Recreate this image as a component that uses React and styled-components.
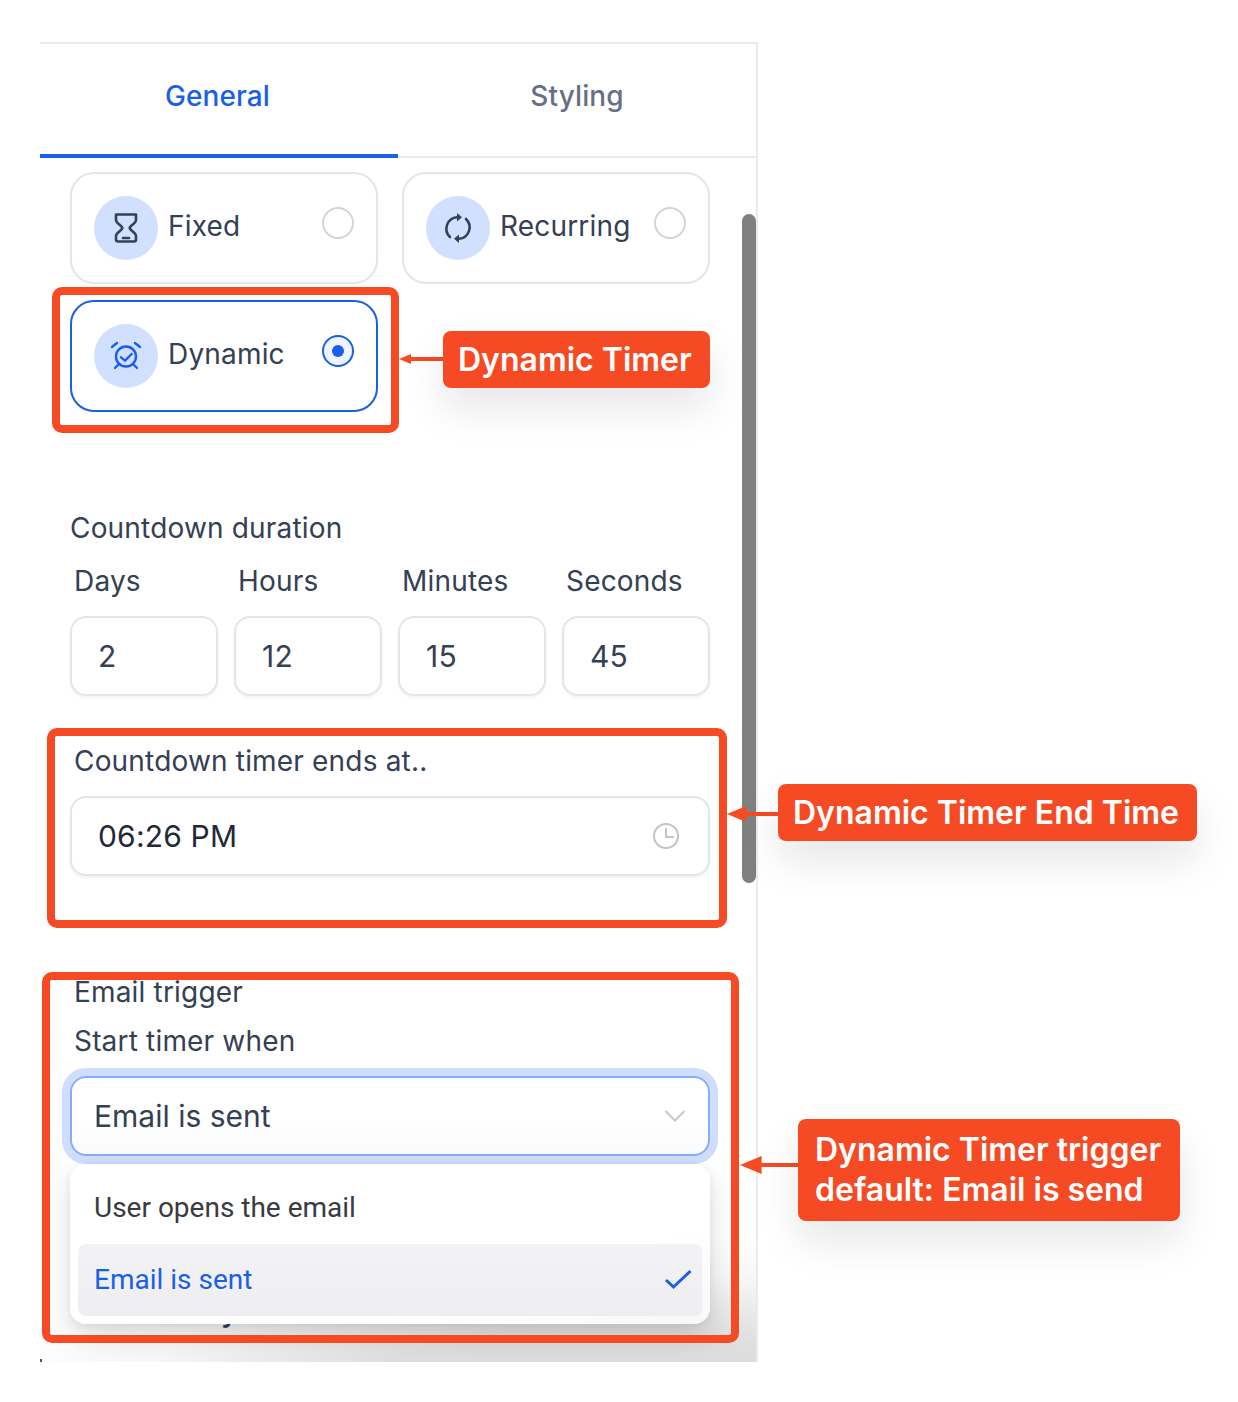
import React from "react";
import styled, { createGlobalStyle } from "styled-components";

const Global = createGlobalStyle`
  html, body { margin: 0; background: #fff; }
  body { font-family: Inter, "Liberation Sans", sans-serif; color: #344054; }
`;

const Stage = styled.div`
  position: relative;
  width: 1238px;
  height: 1402px;
  padding: 42px 0 0 40px;
  box-sizing: border-box;
  overflow: hidden;
`;

const Panel = styled.div`
  position: relative;
  width: 718px;
  height: 1320px;
  box-sizing: border-box;
  background: #fff;
  border-top: 2px solid #ebebef;
  border-right: 2px solid #ebebef;
  overflow: hidden;
  &::after {
    content: "";
    position: absolute;
    left: 0;
    bottom: 0;
    z-index: 4;
    width: 2px;
    height: 3px;
    background: #5a553f;
  }
`;

const Tabs = styled.div`
  display: grid;
  grid-template-columns: 358px 1fr;
  height: 114px;
  box-sizing: border-box;
  border-bottom: 2px solid #ebebef;
`;

const Tab = styled.div`
  display: flex;
  align-items: center;
  justify-content: center;
  height: 114px;
  box-sizing: border-box;
  padding: 0 ${(p) => (p.$active ? 3 : 0)}px 6px 0;
  font-size: 28px;
  font-weight: 500;
  letter-spacing: 0.1px;
  color: ${(p) => (p.$active ? "#1a5fe8" : "#667085")};
  border-bottom: 4px solid ${(p) => (p.$active ? "#1a5fe8" : "transparent")};
`;

const Body = styled.div`
  display: flex;
  flex-direction: column;
  width: 640px;
  padding: 14px 0 0 30px;
  letter-spacing: 0.18px;
`;

const Cards = styled.div`
  display: grid;
  grid-template-columns: 308px 308px;
  column-gap: 24px;
  row-gap: 16px;
`;

const Card = styled.div`
  display: flex;
  align-items: flex-start;
  height: 112px;
  box-sizing: border-box;
  padding: 22px;
  border-radius: 24px;
  border: 2px solid ${(p) => (p.$active ? "#1a5fe8" : "#e4e5ea")};
  background: #fff;
`;

const IconDisc = styled.div`
  display: flex;
  align-items: center;
  justify-content: center;
  flex: none;
  width: 64px;
  height: 64px;
  border-radius: 50%;
  background: #d1e0ff;
`;

const CardLabel = styled.div`
  flex: 1;
  margin-left: 10px;
  line-height: 60px;
  font-size: 28px;
  color: #344054;
`;

const Radio = styled.div`
  display: flex;
  align-items: center;
  justify-content: center;
  flex: none;
  width: 32px;
  height: 32px;
  margin-top: 11px;
  box-sizing: border-box;
  border-radius: 50%;
  border: 2px solid ${(p) => (p.$active ? "#1a5fe8" : "#d0d5dd")};
  background: ${(p) => (p.$active ? "#eff4ff" : "#fff")};
  &::after {
    content: "";
    display: ${(p) => (p.$active ? "block" : "none")};
    width: 12px;
    height: 12px;
    border-radius: 50%;
    background: #1a5fe8;
  }
`;

const SectionTitle = styled.div`
  margin-top: ${(p) => p.$top || 0}px;
  line-height: 34px;
  font-size: 28px;
  color: #344054;
`;

const FieldLabel = styled.div`
  margin-top: ${(p) => p.$top || 0}px;
  padding-left: 4px;
  line-height: 34px;
  font-size: 28px;
  color: #344054;
`;

const Grid = styled.div`
  display: grid;
  grid-template-columns: repeat(4, 148px);
  column-gap: 16px;
`;

const Field = styled.div`
  display: flex;
  flex-direction: column;
  gap: 18px;
  margin-top: 19px;
`;

const Input = styled.div`
  display: flex;
  align-items: center;
  justify-content: space-between;
  height: 80px;
  box-sizing: border-box;
  padding: 0 28px 0 26px;
  margin-top: ${(p) => p.$top || 0}px;
  border: 2px solid #e4e5ea;
  border-radius: 16px;
  box-shadow: 0 2px 3px rgba(16, 24, 40, 0.05);
  background: #fff;
  font-size: 30px;
  color: ${(p) => p.$ink || "#344054"};
`;

const SelectWrap = styled.div`
  position: relative;
  margin-top: 18px;
`;

const Select = styled.div`
  display: flex;
  align-items: center;
  justify-content: space-between;
  height: 80px;
  box-sizing: border-box;
  padding: 0 22px;
  border: 2px solid #84adff;
  border-radius: 16px;
  box-shadow: 0 0 0 8px #cfdefc;
  background: linear-gradient(#fff 55%, #fafafb);
  font-size: 30px;
  letter-spacing: 0;
  color: #344054;
`;

const Menu = styled.div`
  position: absolute;
  top: 88px;
  left: 0;
  right: 0;
  z-index: 2;
  display: flex;
  flex-direction: column;
  height: 160px;
  box-sizing: border-box;
  padding: 8px;
  border-radius: 16px;
  background: linear-gradient(165deg, #fff 70%, #f8f8f8);
  box-shadow: 0 12px 28px rgba(16, 24, 40, 0.14), 0 2px 8px rgba(16, 24, 40, 0.06);
`;

const Option = styled.div`
  display: flex;
  align-items: center;
  justify-content: space-between;
  height: 72px;
  box-sizing: border-box;
  padding: 0 10px 2px 16px;
  border-radius: 8px;
  background: ${(p) => (p.$active ? "linear-gradient(#f3f3f6, #eeeef1)" : "transparent")};
  font-family: Roboto, sans-serif;
  font-size: 28px;
  letter-spacing: 0;
  color: ${(p) => (p.$active ? "#1a5fe8" : "#3a3a40")};
`;

const HiddenHeading = styled.div`
  margin-top: 139px;
  padding-left: 49px;
  line-height: 34px;
  font-size: 28px;
  font-weight: 600;
  color: #344054;
`;

/* soft shadow the annotation tool left over the bottom of the panel */
const BottomShade = styled.div`
  position: absolute;
  left: 0;
  right: 0;
  bottom: 0;
  z-index: 1;
  height: 200px;
  background: radial-gradient(
    ellipse 620px 170px at 78% 118%,
    rgba(0, 0, 0, 0.15) 0%,
    rgba(0, 0, 0, 0.13) 40%,
    rgba(0, 0, 0, 0.03) 75%,
    rgba(0, 0, 0, 0) 100%
  );
`;

const Scrollbar = styled.div`
  position: absolute;
  top: 170px;
  right: 0;
  width: 14px;
  height: 669px;
  border-radius: 7px;
  background: #808080;
`;

const Frame = styled.div`
  position: absolute;
  z-index: 5;
  left: ${(p) => p.$x}px;
  top: ${(p) => p.$y}px;
  width: ${(p) => p.$w}px;
  height: ${(p) => p.$h}px;
  box-sizing: border-box;
  border: 8px solid #f64a24;
  border-radius: 10px;
`;

const Note = styled.div`
  position: absolute;
  z-index: 6;
  left: ${(p) => p.$x}px;
  top: ${(p) => p.$y}px;
  padding: 0 ${(p) => p.$right}px 0 ${(p) => p.$left}px;
  height: ${(p) => p.$h}px;
  display: flex;
  align-items: center;
  box-sizing: border-box;
  border-radius: 8px;
  background: #f64a24;
  color: #fff;
  font-size: 32px;
  font-weight: 600;
  line-height: 40px;
  white-space: nowrap;
  box-shadow: 0 20px 40px rgba(16, 24, 40, 0.1);
`;

const ArrowMark = styled.svg`
  position: absolute;
  z-index: 6;
  left: ${(p) => p.$x}px;
  top: ${(p) => p.$y}px;
`;

const Arrow = ({ x, y, len, head }) => (
  <ArrowMark $x={x} $y={y - head} width={len} height={head * 2} viewBox={`0 0 ${len} ${head * 2}`}>
    <path d={`M0 ${head}L${head * 2.4} 0V${head * 2}Z`} fill="#f64a24" />
    <rect x={head * 2} y={head - 2} width={len} height={4} fill="#f64a24" />
  </ArrowMark>
);

const Hourglass = () => (
  <svg width="32" height="32" viewBox="0 0 32 32" fill="none" stroke="#344054" strokeWidth="2.6" strokeLinejoin="round" strokeLinecap="round">
    <path d="M6 2.500h20v5.500c0 3.400-6 5.600-6.400 8c.4 2.400 6.400 4.600 6.400 8v3.500a2 2 0 0 1-2 2H8a2 2 0 0 1-2-2V24c0-3.400 6-5.600 6.400-8C12 13.600 6 11.400 6 8z" />
    <path d="M13 26h6" />
  </svg>
);

const Recurring = () => (
  <svg width="32" height="32" viewBox="0 0 32 32" fill="none" stroke="#344054" strokeWidth="2.6" strokeLinecap="round">
    <path d="M15 5.200A11.500 11.500 0 0 0 8 25" />
    <path d="M17 26.800A11.500 11.500 0 0 0 24 7" />
    <path d="M15 1l5 4.200-5 4.200z" fill="#344054" stroke="none" />
    <path d="M17 31l-5-4.200 5-4.200z" fill="#344054" stroke="none" />
  </svg>
);

const AlarmCheck = () => (
  <svg width="32" height="32" viewBox="0 0 32 32" fill="none" stroke="#1a5fe8" strokeWidth="2.4" strokeLinecap="round" strokeLinejoin="round">
    <circle cx="16" cy="16.500" r="10" />
    <path d="M11 17.300l4 3.400 6.700-6.700" />
    <path d="M2 7l5-4M30 7l-5-4" />
    <path d="M5 28l3-3M27 28l-3-3" />
  </svg>
);

const Clock = () => (
  <svg width="28" height="28" viewBox="0 0 28 28" fill="none" stroke="#c4c4c4" strokeWidth="2" strokeLinecap="round" strokeLinejoin="round">
    <circle cx="14" cy="14" r="12" />
    <path d="M14 7v8h7" />
  </svg>
);

const Chevron = () => (
  <svg width="22" height="14" viewBox="0 0 22 14" fill="none" stroke="#c8c8c8" strokeWidth="2">
    <path d="M1.500 2l9.500 9.500L20.500 2" />
  </svg>
);

const Check = () => (
  <svg width="28" height="22" viewBox="0 0 28 22" fill="none" stroke="#1a5fe8" strokeWidth="3">
    <path d="M2 12l7.500 7L26.500 3" />
  </svg>
);

const units = [
  ["Days", "2"],
  ["Hours", "12"],
  ["Minutes", "15"],
  ["Seconds", "45"],
];

const App = () => {
  return (
    <Stage>
      <Global />
      <Panel>
        <Tabs>
          <Tab $active>General</Tab>
          <Tab>Styling</Tab>
        </Tabs>
        <Body>
          <Cards>
            <Card>
              <IconDisc><Hourglass /></IconDisc>
              <CardLabel>Fixed</CardLabel>
              <Radio />
            </Card>
            <Card>
              <IconDisc><Recurring /></IconDisc>
              <CardLabel>Recurring</CardLabel>
              <Radio />
            </Card>
            <Card $active>
              <IconDisc><AlarmCheck /></IconDisc>
              <CardLabel>Dynamic</CardLabel>
              <Radio $active />
            </Card>
          </Cards>
          <SectionTitle $top={99}>Countdown duration</SectionTitle>
          <Grid>
            {units.map(([label, value]) => (
              <Field key={label}>
                <FieldLabel>{label}</FieldLabel>
                <Input>{value}</Input>
              </Field>
            ))}
          </Grid>
          <FieldLabel $top={48}>Countdown timer ends at..</FieldLabel>
          <Input $top={18} $ink="#1f2937">
            06:26 PM
            <Clock />
          </Input>
          <FieldLabel $top={99}>Email trigger</FieldLabel>
          <FieldLabel $top={15}>Start timer when</FieldLabel>
          <SelectWrap>
            <Select>
              Email is sent
              <Chevron />
            </Select>
            <Menu>
              <Option>User opens the email</Option>
              <Option $active>
                Email is sent
                <Check />
              </Option>
            </Menu>
          </SelectWrap>
          <HiddenHeading>Visibility</HiddenHeading>
        </Body>
        <BottomShade />
        <Scrollbar />
      </Panel>

      <Frame $x={52} $y={287} $w={347} $h={146} />
      <Frame $x={47} $y={728} $w={680} $h={200} />
      <Frame $x={42} $y={972} $w={697} $h={371} />

      <Arrow x={399} y={359} len={44} head={5} />
      <Arrow x={727} y={814} len={52} head={8} />
      <Arrow x={740} y={1165} len={58} head={9} />

      <Note $x={443} $y={331} $h={57} $left={15} $right={18}>Dynamic Timer</Note>
      <Note $x={778} $y={784} $h={57} $left={15} $right={18}>Dynamic Timer End Time</Note>
      <Note $x={798} $y={1119} $h={102} $left={17} $right={19}>
        Dynamic Timer trigger
        <br />
        default: Email is send
      </Note>
    </Stage>
  );
};

export default App;
